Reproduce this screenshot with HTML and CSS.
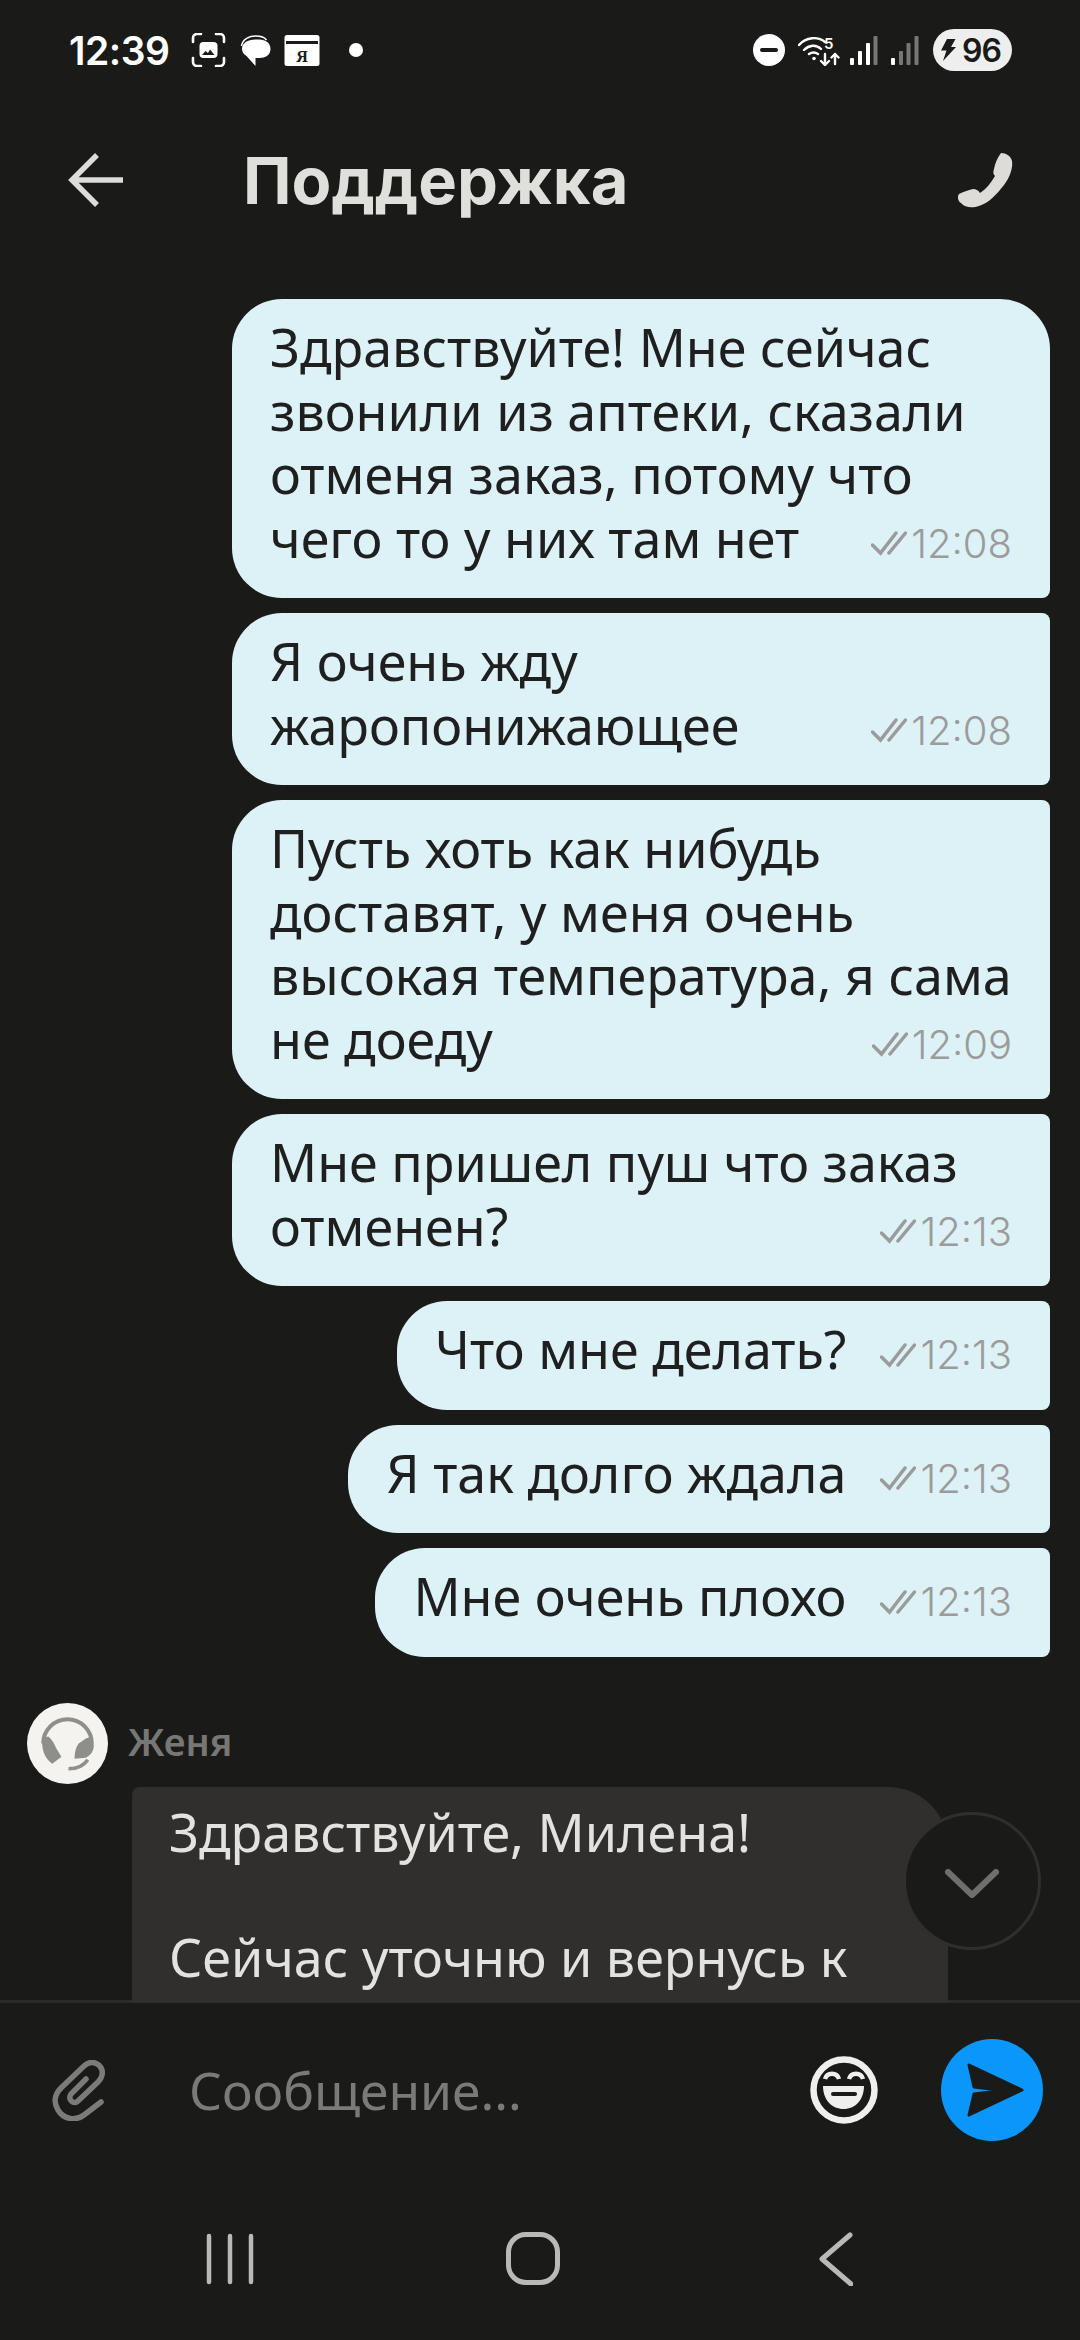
FILE: index.html
```html
<!DOCTYPE html>
<html lang="ru">
<head>
    <meta charset="UTF-8">
    <meta name="viewport" content="width=device-width, initial-scale=1.0">
    <title>Поддержка</title>
    <link rel="stylesheet" href="styles.css">
</head>
<body>
    <div class="status-bar">
        <span class="clock">12:39</span>
        <svg class="st-shot" width="35" height="34" viewBox="0 0 34 34" fill="none" stroke="#fff" stroke-width="2.6" stroke-linecap="round">
            <path d="M1.5 9V5a4 4 0 0 1 4-4h4M24.500 1h4a4 4 0 0 1 4 4v4M32.500 25v4a4 4 0 0 1-4 4h-4M9.500 33h-4a4 4 0 0 1-4-4v-4"/>
            <rect x="8" y="9" width="18" height="16" rx="4" fill="#fff" stroke="none"/>
            <path d="M10.500 22l3.500-4 2.500 2 2-3.500 4.500 5.500z" fill="#1a1a19" stroke="none"/>
        </svg>
        <svg class="st-chat" width="31" height="31" viewBox="0 0 30 31">
            <path d="M1 11C2 4 9 1 15 1c5 0 9 1 11 4" fill="none" stroke="#fff" stroke-width="1.500"/>
            <path d="M1.500 14C1.500 8 7 4.500 15 4.500h4C25 4.500 30 8 30 14s-5 9-11 9h-4l0 8-9-10C3 19 1.500 17 1.500 14z" fill="#fff"/>
        </svg>
        <svg class="st-card" width="36" height="31" viewBox="0 0 35 31">
            <rect width="35" height="31" rx="2.500" fill="#fff"/>
            <rect x="1.500" y="6" width="32" height="3" fill="#1a1a19"/>
            <text x="17.500" y="27" text-anchor="middle" font-family="Liberation Serif, serif" font-weight="700" font-size="16" fill="#1a1a19">Я</text>
        </svg>
        <span class="st-dot"></span>
        <span class="status-spacer"></span>
        <span class="st-minus"><span></span></span>
        <svg class="st-wifi" width="42" height="32" viewBox="0 0 42 32" fill="none" stroke="#fff" stroke-width="2.400" stroke-linecap="round" stroke-linejoin="round">
            <path d="M1 11C8 3 20 2 27 8M6 16c5-5 12-6 17-1M11 20c3-2 6-2 9 0"/>
            <circle cx="16" cy="24.500" r="1.800" fill="#fff" stroke="none"/>
            <path d="M27 20v11M23 27l4 4 4-4M37 30V20M33.500 23.500L37 20l3.500 3.500"/>
            <text x="26" y="15" font-family="Inter, sans-serif" font-size="15" font-weight="600" fill="#fff" stroke="none">5</text>
        </svg>
        <svg class="st-signal" width="28" height="29" viewBox="0 0 28 29">
            <rect x="0" y="22" width="4" height="7" rx="1" fill="#fff"/>
            <rect x="8" y="15" width="4" height="14" rx="1" fill="#fff"/>
            <rect x="16" y="7" width="4" height="22" rx="1" fill="#fff"/>
            <rect x="23.500" y="0" width="4" height="29" rx="1" fill="#777"/>
        </svg>
        <svg class="st-signal" width="28" height="29" viewBox="0 0 28 29">
            <rect x="0" y="22" width="4" height="7" rx="1" fill="#fff"/>
            <rect x="8" y="15" width="4" height="14" rx="1" fill="#777"/>
            <rect x="15.500" y="7" width="4" height="22" rx="1" fill="#777"/>
            <rect x="23.500" y="0" width="4" height="29" rx="1" fill="#777"/>
        </svg>
        <span class="battery">
            <svg width="15" height="22" viewBox="0 0 15 22"><path d="M6 0h8.500L10 8h5L2 22l3.500-10.500H0z" fill="#1a1a19"/></svg>
            <span>96</span>
        </span>
    </div>

    <div class="top-bar">
        <svg class="back-arrow" width="55" height="54" viewBox="0 0 55 54" fill="none" stroke="#dddcd8" stroke-width="5.500">
            <path d="M29 2L4 27l25 25M4 27h51"/>
        </svg>
        <h1 class="title">Поддержка</h1>
        <svg class="call" width="55" height="55" viewBox="0 0 55 55">
            <path d="M43 0c5 0 10 3 11 8 1 7-2 16-8 24-7 9-15 18-25 21-6 2-14 2-18-3-3-2-4-6-2-9 4-2 9-4 14-5 3 0 5 1 7 4 6-4 11-10 15-17-2-2-2-4-1-7 1-5 3-11 7-16z" fill="#dddcd8"/>
        </svg>
    </div>

    <div class="chat">
        <div class="msg msg-wide msg-first">
            <p>Здравствуйте! Мне сейчас<br>звонили из аптеки, сказали<br>отменя заказ, потому что</p>
            <div class="last-line">
                <span>чего то у них там нет</span>
                <span class="meta"><svg width="36" height="26" viewBox="0 0 36 26" fill="none" stroke="#9b9b9b" stroke-width="3.500" stroke-linecap="round"><path d="M1.500 15l8 8L25 3M18 23L34.500 3"/></svg>12:08</span>
            </div>
        </div>
        <div class="msg msg-wide">
            <p>Я очень жду</p>
            <div class="last-line">
                <span>жаропонижающее</span>
                <span class="meta"><svg width="36" height="26" viewBox="0 0 36 26" fill="none" stroke="#9b9b9b" stroke-width="3.500" stroke-linecap="round"><path d="M1.500 15l8 8L25 3M18 23L34.500 3"/></svg>12:08</span>
            </div>
        </div>
        <div class="msg msg-wide">
            <p>Пусть хоть как нибудь<br>доставят, у меня очень<br>высокая температура, я сама</p>
            <div class="last-line">
                <span>не доеду</span>
                <span class="meta"><svg width="36" height="26" viewBox="0 0 36 26" fill="none" stroke="#9b9b9b" stroke-width="3.500" stroke-linecap="round"><path d="M1.500 15l8 8L25 3M18 23L34.500 3"/></svg>12:09</span>
            </div>
        </div>
        <div class="msg msg-wide">
            <p>Мне пришел пуш что заказ</p>
            <div class="last-line">
                <span>отменен?</span>
                <span class="meta"><svg width="36" height="26" viewBox="0 0 36 26" fill="none" stroke="#9b9b9b" stroke-width="3.500" stroke-linecap="round"><path d="M1.500 15l8 8L25 3M18 23L34.500 3"/></svg>12:13</span>
            </div>
        </div>
        <div class="msg">
            <div class="last-line">
                <span>Что мне делать?</span>
                <span class="meta"><svg width="36" height="26" viewBox="0 0 36 26" fill="none" stroke="#9b9b9b" stroke-width="3.500" stroke-linecap="round"><path d="M1.500 15l8 8L25 3M18 23L34.500 3"/></svg>12:13</span>
            </div>
        </div>
        <div class="msg">
            <div class="last-line">
                <span>Я так долго ждала</span>
                <span class="meta"><svg width="36" height="26" viewBox="0 0 36 26" fill="none" stroke="#9b9b9b" stroke-width="3.500" stroke-linecap="round"><path d="M1.500 15l8 8L25 3M18 23L34.500 3"/></svg>12:13</span>
            </div>
        </div>
        <div class="msg">
            <div class="last-line">
                <span>Мне очень плохо</span>
                <span class="meta"><svg width="36" height="26" viewBox="0 0 36 26" fill="none" stroke="#9b9b9b" stroke-width="3.500" stroke-linecap="round"><path d="M1.500 15l8 8L25 3M18 23L34.500 3"/></svg>12:13</span>
            </div>
        </div>

        <div class="agent">
            <svg class="avatar" width="81" height="81" viewBox="0 0 80 80">
                <circle cx="40" cy="40" r="40" fill="#f4f3ef"/>
                <path d="M16 40a24 24 0 0 1 48 0" fill="none" stroke="#8e8e8a" stroke-width="4"/>
                <path d="M15 40c0-4 3-7 6-7 4 3 7 9 8 12l5 8-9 7c-6-4-10-12-10-20z" fill="#8e8e8a"/>
                <path d="M61 34c3 1 5 5 5 8 0 5-3 10-8 12l-11 1c0-6 1-11 4-15 3-2 6-5 10-6z" fill="#8e8e8a"/>
                <path d="M41 65c8 0 15-3 19-9" fill="none" stroke="#8e8e8a" stroke-width="3.500"/>
            </svg>
            <span class="agent-name">Женя</span>
        </div>
        <div class="reply">
            <p>Здравствуйте, Милена!</p>
            <p class="reply-gap">Сейчас уточню и вернусь к</p>
        </div>

        <button class="to-bottom">
            <svg width="54" height="29" viewBox="0 0 54 29" fill="none" stroke="#6f6f6d" stroke-width="6" stroke-linecap="round" stroke-linejoin="round"><path d="M3 3l24 23L51 3"/></svg>
        </button>
    </div>

    <div class="composer">
        <svg class="clip" width="53" height="61" viewBox="0 0 53 61" fill="none" stroke="#7b7b79" stroke-width="5.500" stroke-linecap="round">
            <path d="M49 42L32 55C24 61 12 60 6 50 1 42 3 34 9 28L32 6C38 0 47 2 50 10 51 15 49 19 46 22L26 41C22 45 15 40 19 34L34 19"/>
        </svg>
        <span class="placeholder">Сообщение...</span>
        <svg class="smile" width="68" height="68" viewBox="0 0 68 68">
            <circle cx="34" cy="34" r="30.500" fill="none" stroke="#efefed" stroke-width="6.500"/>
            <path d="M15 23c2-7 12-7 14 0M39 23c2-7 12-7 14 0" fill="none" stroke="#efefed" stroke-width="4.500"/>
            <path d="M13 30h41c0 14-9 23-20.500 23S13 44 13 30z" fill="#efefed"/>
            <rect x="21" y="36" width="26" height="4" rx="2" fill="#1a1a19"/>
        </svg>
        <button class="send">
            <svg width="102" height="102" viewBox="0 0 102 102">
                <path d="M28 26L81 51 28 76 33 55 62 51.500 33 48z" fill="#1a1a19" stroke="#1a1a19" stroke-width="3" stroke-linejoin="round"/>
            </svg>
        </button>
    </div>

    <div class="nav-bar">
        <svg class="nav-recent" width="50" height="52" viewBox="0 0 50 52" fill="none" stroke="#b9b9b7" stroke-width="4.500" stroke-linecap="round"><path d="M3 3v46M24 3v46M45 3v46"/></svg>
        <span class="nav-home"></span>
        <svg class="nav-back" width="34" height="54" viewBox="0 0 34 54" fill="none" stroke="#b9b9b7" stroke-width="5" stroke-linecap="round" stroke-linejoin="round"><path d="M31 3L3 27l29 25"/></svg>
    </div>
</body>
</html>
```

FILE: styles.css
```css
html, body {
    margin: 0;
    height: 100%;
}
body {
    width: 1080px;
    height: 2340px;
    overflow: hidden;
    display: flex;
    flex-direction: column;
    background-color: #1a1a19;
    font-family: "Noto Sans", sans-serif;
    color: #1f1f1f;
}
p {
    margin: 0;
}
svg {
    display: block;
    flex-shrink: 0;
}
button {
    padding: 0;
    border: none;
    background: none;
}

/* status bar */
.status-bar {
    height: 100px;
    flex-shrink: 0;
    display: flex;
    align-items: center;
    padding: 0 68px 0 69px;
    color: white;
}
.clock {
    width: 100px;
    margin-right: 22px;
    font-family: Inter, sans-serif;
    font-size: 39px;
    font-weight: 600;
    letter-spacing: -0.5px;
}
.st-chat {
    margin-left: 14px;
}
.st-card {
    margin-left: 13px;
}
.st-dot {
    width: 14px;
    height: 14px;
    margin-left: 29px;
    border-radius: 50%;
    background: white;
}
.status-spacer {
    flex: 1;
}
.st-minus {
    width: 32px;
    height: 32px;
    margin-right: 13px;
    border-radius: 50%;
    background: white;
    display: flex;
    align-items: center;
    justify-content: center;
}
.st-minus span {
    width: 18px;
    height: 4px;
    border-radius: 2px;
    background: #1a1a19;
}
.st-wifi {
    margin-right: 10px;
}
.st-signal {
    margin-right: 13px;
}
.st-signal + .battery {
    margin-left: 1px;
}
.battery {
    width: 79px;
    height: 42px;
    box-sizing: border-box;
    padding-left: 8px;
    border-radius: 21px;
    background: #eeeeee;
    display: flex;
    align-items: center;
    gap: 6px;
    font-family: Inter, sans-serif;
    font-size: 32px;
    font-weight: 600;
    letter-spacing: -1px;
    color: #1a1a19;
}

/* header */
.top-bar {
    height: 160px;
    flex-shrink: 0;
    display: flex;
    align-items: center;
    padding: 0 67px 0 68px;
}
.title {
    flex: 1;
    margin: 0 0 0 120px;
    font-family: Inter, sans-serif;
    font-size: 65px;
    font-weight: 700;
    color: #dfdfdb;
}

/* messages */
.chat {
    position: relative;
    height: 1743px;
    flex-shrink: 0;
    box-sizing: border-box;
    overflow: hidden;
    padding: 39px 30px 0 27px;
    display: flex;
    flex-direction: column;
    align-items: flex-end;
    gap: 15px;
    box-shadow: inset 0 -3px 0 #2b2b2a;
}
.msg {
    box-sizing: border-box;
    padding: 16px 38px 29px;
    border-radius: 50px 8px 8px 50px;
    background: #ddf2f6;
    font-size: 52px;
    line-height: 63.5px;
    white-space: nowrap;
}
.msg-wide {
    width: 818px;
}
.msg-first {
    border-top-right-radius: 50px;
}
.last-line {
    display: flex;
    justify-content: space-between;
    gap: 34px;
}
.meta {
    display: flex;
    align-items: center;
    gap: 4px;
    padding-top: 6px;
    margin-bottom: -6px;
    font-family: Inter, sans-serif;
    font-size: 40px;
    font-weight: 300;
    color: #9b9b9b;
}

.agent {
    align-self: flex-start;
    margin-top: 31px;
    display: flex;
    align-items: center;
    gap: 20px;
}
.agent-name {
    margin-top: -4px;
    font-size: 38px;
    font-weight: 600;
    color: #777775;
}
.reply {
    align-self: flex-start;
    width: 816px;
    box-sizing: border-box;
    margin: -12px 0 0 105px;
    padding: 14px 37px;
    height: 300px;
    flex-shrink: 0;
    border-radius: 8px 60px 0 0;
    background: #302f2e;
    color: #e2e2de;
    font-size: 52px;
    line-height: 62.5px;
    white-space: nowrap;
}
.reply-gap {
    margin-top: 62.5px;
}
.to-bottom {
    position: absolute;
    left: 903px;
    top: 1552px;
    width: 138px;
    height: 138px;
    box-sizing: border-box;
    border: 3px solid #2f2f2e;
    border-radius: 50%;
    background: #1a1a19;
    display: flex;
    align-items: center;
    justify-content: center;
    padding-top: 5px;
}

/* input */
.composer {
    height: 174px;
    flex-shrink: 0;
    display: flex;
    align-items: center;
    padding: 0 37px 0 52px;
}
.placeholder {
    flex: 1;
    margin-left: 84px;
    font-size: 51.5px;
    color: #7a7a78;
}
.send {
    width: 102px;
    height: 102px;
    margin-left: 63px;
    border-radius: 50%;
    background: #0a96fa;
}

/* nav */
.nav-bar {
    height: 163px;
    display: flex;
    align-items: center;
    padding-left: 206px;
}
.nav-home {
    width: 54px;
    height: 53px;
    box-sizing: border-box;
    margin-left: 250px;
    border: 5px solid #b9b9b7;
    border-radius: 20px;
}
.nav-back {
    margin-left: 259px;
}
```
